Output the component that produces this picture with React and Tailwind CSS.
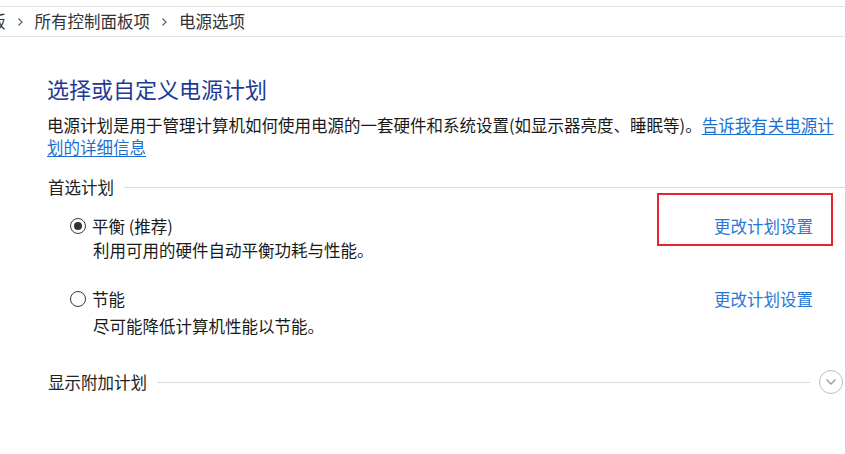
import React from "react";

const font = {
  fontFamily: '"Noto Sans CJK SC", "Noto Sans", "Liberation Sans", sans-serif',
};

const Chevron = () => (
  <svg width="7" height="10" viewBox="0 0 7 10" className="shrink-0">
    <path d="M1.5 1.5 L5 5 L1.5 8.5" fill="none" stroke="#666" strokeWidth="1.2" />
  </svg>
);

const Radio = ({ checked }) => (
  <span className="w-[16px] h-[16px] rounded-full border-[1.5px] border-[#3a3a3a] bg-white flex items-center justify-center shrink-0">
    {checked && <span className="w-[8px] h-[8px] rounded-full bg-[#333]" />}
  </span>
);

const Section = ({ label, children, className = "" }) => (
  <div className={`flex items-center h-[22px] ${className}`}>
    <span className="text-[#222] whitespace-nowrap pl-[1px]">{label}</span>
    <div className="flex-1 h-px bg-[#dadada] ml-[10px]" />
    {children}
  </div>
);

const plans = [
  { name: "平衡 (推荐)", desc: "利用可用的硬件自动平衡功耗与性能。", checked: true, boxed: true },
  { name: "节能", desc: "尽可能降低计算机性能以节能。", checked: false },
];

export default function App() {
  return (
    <div className="w-[845px] h-[454px] bg-white overflow-hidden text-[16.5px] text-[#1a1a1a]" style={font}>
      <div className="pt-[6px]">
        <div className="h-[31px] border-y border-[#e3e3e3] flex items-center gap-[11px] text-[#333] whitespace-nowrap">
          <span className="-ml-[11px]">版</span>
          <Chevron />
          <span>所有控制面板项</span>
          <Chevron />
          <span>电源选项</span>
        </div>
      </div>

      <div className="pl-[47px]">
        <h1 className="mt-[36px] text-[22px] leading-[30px] text-[#1e3a96] font-normal">
          选择或自定义电源计划
        </h1>

        <div className="mt-[11px] leading-[22px] pr-[8px]">
          <div className="whitespace-nowrap">
            电源计划是用于管理计算机如何使用电源的一套硬件和系统设置(如显示器亮度、睡眠等)。
            <a className="text-[#1a6fd0] underline underline-offset-2">告诉我有关电源计</a>
          </div>
          <a className="text-[#1a6fd0] underline underline-offset-2">划的详细信息</a>
        </div>

        <Section label="首选计划" className="mt-[18px]" />

        <div className="pr-[32px]">
          {plans.map((p, i) => (
            <div key={p.name} className={i === 0 ? "mt-[16px]" : "mt-[25px]"}>
              <div className="flex items-center justify-between h-[24px]">
                <div className="flex items-center gap-[6px] pl-[23px] text-[#1a1a1a]">
                  <Radio checked={p.checked} />
                  <span>{p.name}</span>
                </div>
                <div className="relative">
                  <a className="text-[#2a78d4] leading-[24px]">更改计划设置</a>
                  {p.boxed && (
                    <span className="absolute -left-[57px] -right-[20px] -top-[21px] -bottom-[8px] border-2 border-[#e8242a]" />
                  )}
                </div>
              </div>
              <div className={`pl-[46px] leading-[24px] ${i === 0 ? "" : "mt-[3px]"}`}>{p.desc}</div>
            </div>
          ))}
        </div>

        <Section label="显示附加计划" className="mt-[33px] pr-[2px]">
          <span className="ml-[9px] w-[24px] h-[24px] rounded-full border-[1.5px] border-[#bdbdbd] flex items-center justify-center">
            <svg width="12" height="8" viewBox="0 0 12 8">
              <path d="M1.5 1.5 L6 6 L10.5 1.5" fill="none" stroke="#9a9a9a" strokeWidth="1.4" />
            </svg>
          </span>
        </Section>
      </div>
    </div>
  );
}
